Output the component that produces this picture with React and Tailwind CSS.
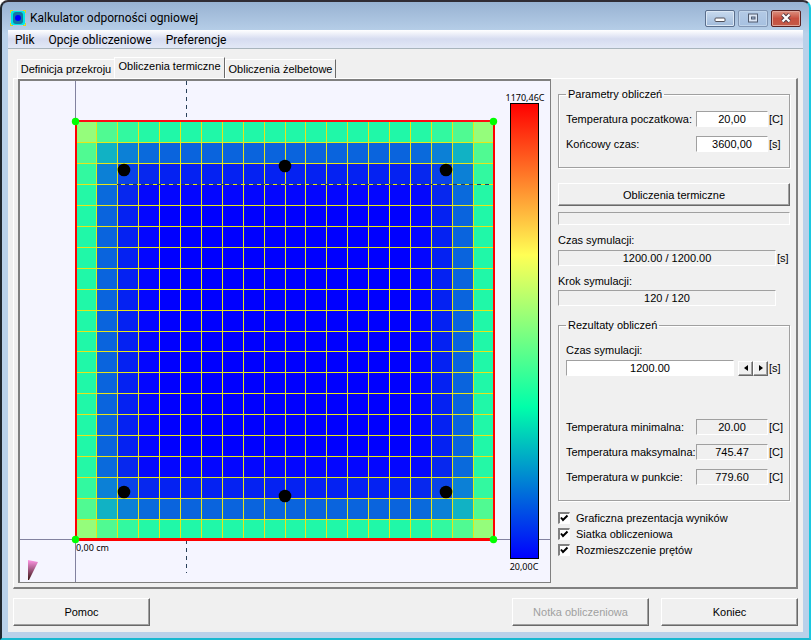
import React, { useState } from 'react';

const N = 20;
const LEFT = 55;
const TOP = 40;
const SIDE = 419;
const RIGHT = LEFT + SIDE;
const BOTTOM = TOP + SIDE;

// cell colour by distance (in cells) from the two nearest heated edges
const HEAT = [
  ['#95fd7b', '#50fa92', '#32f9a0', '#24f8a6', '#20f8a8'],
  ['#50fa92', '#11b2c4', '#0c80d6', '#0a6adc', '#0a64dd'],
  ['#32f9a0', '#0c80d6', '#0a44e8', '#0728ee', '#0522f2'],
  ['#24f8a6', '#0a6adc', '#0728ee', '#0508fc', '#0406ff'],
  ['#20f8a8', '#0a64dd', '#0522f2', '#0406ff', '#0000ff'],
];

const BARS = [
  [104, 89],
  [265, 85],
  [426, 89],
  [104, 411],
  [265, 415],
  [426, 411],
];

const at = (i) => Math.round((i * SIDE) / N);
const depth = (i) => Math.min(i, N - 1 - i, 4);
const range = (n) => Array.from({ length: n }, (_, i) => i);

const RAISED = 'border border-t-white border-l-white border-r-[#696969] border-b-[#696969] shadow-[inset_-1px_-1px_0_#a0a0a0]';
const SUNKEN = 'border border-t-[#a0a0a0] border-l-[#a0a0a0] border-r-white border-b-white';

const SectionView = ({ heat, mesh, bars }) => (
  <svg viewBox="0 0 530 501" className="block h-auto w-full" role="img" aria-label="Rozkład temperatury w przekroju">
    <rect width="530" height="501" fill="#f5f5ff" />
    <path d={`M${LEFT + 0.5} 0V501M0 ${BOTTOM - 0.5}H530`} stroke="#8282a0" strokeWidth="1" />

    <g shapeRendering="crispEdges">
      {heat && range(N * N).map((k) => {
        const c = k % N;
        const r = Math.floor(k / N);
        return (
          <rect
            key={k}
            x={LEFT + at(c)}
            y={TOP + at(r)}
            width={at(c + 1) - at(c)}
            height={at(r + 1) - at(r)}
            fill={HEAT[depth(r)][depth(c)]}
          />
        );
      })}
      {mesh && range(N - 1).map((i) => (
        <path
          key={i}
          d={`M${LEFT + at(i + 1) + 0.5} ${TOP}V${BOTTOM}M${LEFT} ${TOP + at(i + 1) + 0.5}H${RIGHT}`}
          stroke="#e6e619"
          strokeWidth="1"
        />
      ))}
      <path d="M166.5 0V41M166.5 459V492" stroke="#28405a" strokeWidth="1" strokeDasharray="4 4" />
      <path d="M97 103.5H474" stroke="#28405a" strokeWidth="1" strokeDasharray="4 4" />
      <path d={`M${LEFT} ${TOP}H${RIGHT}`} stroke="#ff0a14" strokeWidth="2" />
      <path d={`M${LEFT + 1} ${TOP}V${BOTTOM}M${RIGHT} ${TOP}V${BOTTOM}`} stroke="#ff0000" strokeWidth="2" />
      <path d={`M${LEFT} ${BOTTOM - 0.5}H${RIGHT}`} stroke="#ff0000" strokeWidth="3" />
    </g>

    {bars && BARS.map(([x, y]) => <circle key={`${x}-${y}`} cx={x} cy={y} r="6.3" />)}

    {[[LEFT + 1, TOP + 1], [RIGHT, TOP + 1], [LEFT + 1, BOTTOM], [RIGHT, BOTTOM]].map(([x, y]) => (
      <circle key={`${x}-${y}`} cx={x - 0.5} cy={y - 0.5} r="3.7" fill="#00ff00" />
    ))}

    {/* temperature scale */}
    <defs>
      <linearGradient id="scale" x1="0" y1="0" x2="0" y2="1">
        <stop offset="0" stopColor="#ff0000" />
        <stop offset="0.333" stopColor="#ffff55" />
        <stop offset="0.667" stopColor="#00ffaa" />
        <stop offset="1" stopColor="#0000ff" />
      </linearGradient>
      <linearGradient id="cone" x1="0" y1="0" x2="0" y2="1">
        <stop offset="0" stopColor="#ff96e6" />
        <stop offset="1" stopColor="#3c1414" />
      </linearGradient>
    </defs>
    <rect x="490.5" y="22.5" width="28" height="455" fill="url(#scale)" stroke="#000" />
    <path d="M8 479l10 2L9 499H8z" fill="url(#cone)" />

    <g className="text-[9px]" fontFamily="Noto Sans, sans-serif">
      <text x="505" y="20" textAnchor="middle">1170,46C</text>
      <text x="504" y="489" textAnchor="middle">20,00C</text>
      <text x="56" y="470">0,00 cm</text>
    </g>
  </svg>
);

const Group = ({ title, className = '', children }) => (
  <fieldset className={`min-w-0 border border-[#a0a0a0] px-[7px] shadow-[1px_1px_0_#fff,inset_1px_1px_0_#fff] ${className}`}>
    <legend className="px-0.5 leading-3">{title}</legend>
    {children}
  </fieldset>
);

const Field = ({ id, label, value, unit, readOnly }) => (
  <div className="flex items-center">
    <label htmlFor={id} className="min-w-0 flex-1 whitespace-nowrap">{label}</label>
    <input
      id={id}
      defaultValue={value}
      readOnly={readOnly}
      className={`h-4 w-[72px] shrink-0 text-center ${SUNKEN} ${readOnly ? 'bg-[#f0f0f0]' : 'bg-white'}`}
    />
    <span className="w-[14px] pl-px">{unit}</span>
  </div>
);

const Check = ({ label, checked, onChange }) => (
  <label className="flex h-4 items-center gap-1.5">
    <span className="relative flex h-3 w-3">
      <input
        type="checkbox"
        checked={checked}
        onChange={(e) => onChange(e.target.checked)}
        className="h-3 w-3 appearance-none border border-t-2 border-l-2 border-t-[#808080] border-l-[#808080] border-r-white border-b-white bg-white"
      />
      {checked && (
        <svg viewBox="0 0 12 12" className="pointer-events-none absolute inset-0 h-3 w-3">
          <path d="M3 5.5L5 8L9.5 3.5" fill="none" stroke="#000" strokeWidth="2" />
        </svg>
      )}
    </span>
    {label}
  </label>
);

const TitleBar = () => (
  <header className="flex h-7 items-center px-0.5 pt-1">
    <svg viewBox="0 0 16 16" className="h-4 w-4" aria-hidden="true">
      <rect x="1" y="1" width="14" height="14" rx="2" fill="#00e6e6" />
      <path d="M0 0h3v1H1v2H0zM13 0h3v3h-1V1h-2zM0 13h1v2h2v1H0zM15 13h1v3h-3v-1h2z" fill="#d8d820" />
      <rect x="3" y="2" width="10" height="12" rx="3" fill="#1478a0" />
      <circle cx="8" cy="8" r="3" fill="#0000ff" />
    </svg>
    <h1 className="ml-1 flex-1 font-['Roboto',sans-serif] text-xs">Kalkulator odporności ogniowej</h1>
    <div className="flex gap-[3px]">
      <button aria-label="Minimalizuj" className="flex h-[17px] w-[30px] items-center justify-center rounded-xs border border-[#5a6e8c] bg-linear-to-b from-[#c8daee] via-[#b4cae4] to-[#a0bada] shadow-[inset_0_0_0_1px_#dce8f5]">
        <svg viewBox="0 0 12 10" className="h-[10px] w-3"><rect x="1" y="5" width="10" height="3.5" rx="1" fill="#fff" stroke="#50505a" /></svg>
      </button>
      <button aria-label="Maksymalizuj" className="flex h-[17px] w-[30px] items-center justify-center rounded-xs border border-[#8296b4] bg-linear-to-b from-[#b4cae6] to-[#a6c0e0] shadow-[inset_0_0_0_1px_#c0d4ea]">
        <svg viewBox="0 0 12 10" className="h-[10px] w-3"><rect x="1.5" y="1" width="9" height="8" fill="#dce6f5" stroke="#505a6e" /><rect x="4.5" y="4" width="3.5" height="2" fill="#a0b8dc" stroke="#505a6e" /></svg>
      </button>
      <button aria-label="Zamknij" className="flex h-[17px] w-[30px] items-center justify-center rounded-xs border border-[#5a2020] bg-linear-to-b from-[#dc9080] via-[#c85040] to-[#c45a48] shadow-[inset_0_0_0_1px_#e0a498]">
        <svg viewBox="0 0 12 10" className="h-[10px] w-3"><path d="M2.5 1.5l7 7M9.5 1.5l-7 7" stroke="#503c46" strokeWidth="4" /><path d="M2.5 1.5l7 7M9.5 1.5l-7 7" stroke="#fff" strokeWidth="2.2" /></svg>
      </button>
    </div>
  </header>
);

const App = () => {
  const [heat, setHeat] = useState(true);
  const [mesh, setMesh] = useState(true);
  const [bars, setBars] = useState(true);

  return (
    <div className="flex min-h-screen flex-col rounded-t-lg border-2 border-t-[#302c34] border-r-[#18c8e0] border-b-[#18b8d0] border-l-[#202830] bg-linear-to-b from-[#98b2d2] via-[#b9d1ea] via-5% to-[#b9d1ea] px-1.5 pb-1.5 font-['Liberation_Sans',Arial,sans-serif] text-[11px] leading-4 text-black">
      <TitleBar />

      <nav className="flex h-[19px] items-center gap-3.5 border-b border-[#a8b4bc] bg-linear-to-b from-white via-[#d6dcf0] to-[#e2e8f6] px-[7px] pt-0.5 font-['Roboto',sans-serif] text-xs">
        <button>Plik</button>
        <button>Opcje obliczeniowe</button>
        <button>Preferencje</button>
      </nav>

      <main className="flex flex-1 flex-col bg-[#f0f0f0] px-[5px] pt-2">
        <div role="tablist" className="flex items-end pl-1 whitespace-nowrap">
          <button role="tab" className="h-[19px] w-[97px] border-t border-l border-white">Definicja przekroju</button>
          <button role="tab" aria-selected="true" className="h-[21px] w-[111px] border border-b-0 border-white border-r-[#696969] pb-1">Obliczenia termiczne</button>
          <button role="tab" className="h-[19px] w-[111px] border border-b-0 border-white border-r-[#696969]">Obliczenia żelbetowe</button>
        </div>

        <div className="flex gap-[7px] border-t border-r-2 border-b-2 border-l border-t-white border-r-[#808080] border-b-[#808080] border-l-white pr-[6px] pb-1 pl-1">
          <div className="min-w-0 flex-1 self-start border border-t-2 border-l-2 border-[#808080]">
            <SectionView heat={heat} mesh={mesh} bars={bars} />
          </div>

          <aside className="w-[232px] shrink-0 pt-[9px]">
            <Group title="Parametry obliczeń" className="h-20">
              <div className="flex flex-col gap-[9px] pt-[11px]">
                <Field id="t0" label="Temperatura poczatkowa:" value="20,00" unit="[C]" />
                <Field id="tk" label="Końcowy czas:" value="3600,00" unit="[s]" />
              </div>
            </Group>

            <button className={`mt-[15px] block h-[23px] w-full ${RAISED}`}>Obliczenia termiczne</button>
            <div role="progressbar" aria-label="Postęp" className={`mt-1.5 h-[13px] ${SUNKEN}`} />

            <label htmlFor="sim" className="mt-[7px] block">Czas symulacji:</label>
            <div className="mt-0.5 flex items-center">
              <input id="sim" readOnly defaultValue="1200.00 / 1200.00" className={`h-4 min-w-0 flex-1 text-center ${SUNKEN}`} />
              <span className="w-[14px] pl-px">[s]</span>
            </div>
            <label htmlFor="step" className="mt-[7px] block">Krok symulacji:</label>
            <input id="step" readOnly defaultValue="120 / 120" className={`mt-px block h-4 w-[218px] text-center ${SUNKEN}`} />

            <Group title="Rezultaty obliczeń" className="mt-[13px] h-[182px]">
              <label htmlFor="time" className="mt-[11px] block">Czas symulacji:</label>
              <div className="flex h-5 items-center">
                <input id="time" defaultValue="1200.00" className={`h-4 min-w-0 flex-1 bg-white text-center ${SUNKEN}`} />
                <button aria-label="Wstecz" className={`ml-1 flex h-[15px] w-[15px] items-center justify-center ${RAISED}`}>
                  <svg viewBox="0 0 4 6" className="h-1.5 w-1"><path d="M4 0L0 3l4 3z" /></svg>
                </button>
                <button aria-label="Dalej" className={`flex h-[15px] w-[15px] items-center justify-center ${RAISED}`}>
                  <svg viewBox="0 0 4 6" className="h-1.5 w-1"><path d="M0 0l4 3-4 3z" /></svg>
                </button>
                <span className="w-[14px] pl-px">[s]</span>
              </div>
              <div className="mt-[41px] flex flex-col gap-[9px]">
                <Field id="tmin" label="Temperatura minimalna:" value="20.00" unit="[C]" readOnly />
                <Field id="tmax" label="Temperatura maksymalna:" value="745.47" unit="[C]" readOnly />
                <Field id="tpt" label="Temperatura w punkcie:" value="779.60" unit="[C]" readOnly />
              </div>
            </Group>

            <div className="mt-[9px]">
              <Check label="Graficzna prezentacja wyników" checked={heat} onChange={setHeat} />
              <Check label="Siatka obliczeniowa" checked={mesh} onChange={setMesh} />
              <Check label="Rozmieszczenie prętów" checked={bars} onChange={setBars} />
            </div>
          </aside>
        </div>

        <footer className="mt-[9px] flex gap-3">
          <button className={`mr-auto h-7 w-[137px] ${RAISED}`}>Pomoc</button>
          <button disabled className={`h-7 w-[137px] text-[#a0a0a0] ${RAISED}`}>Notka obliczeniowa</button>
          <button className={`h-7 w-[137px] ${RAISED}`}>Koniec</button>
        </footer>
      </main>
    </div>
  );
};

export default App;
